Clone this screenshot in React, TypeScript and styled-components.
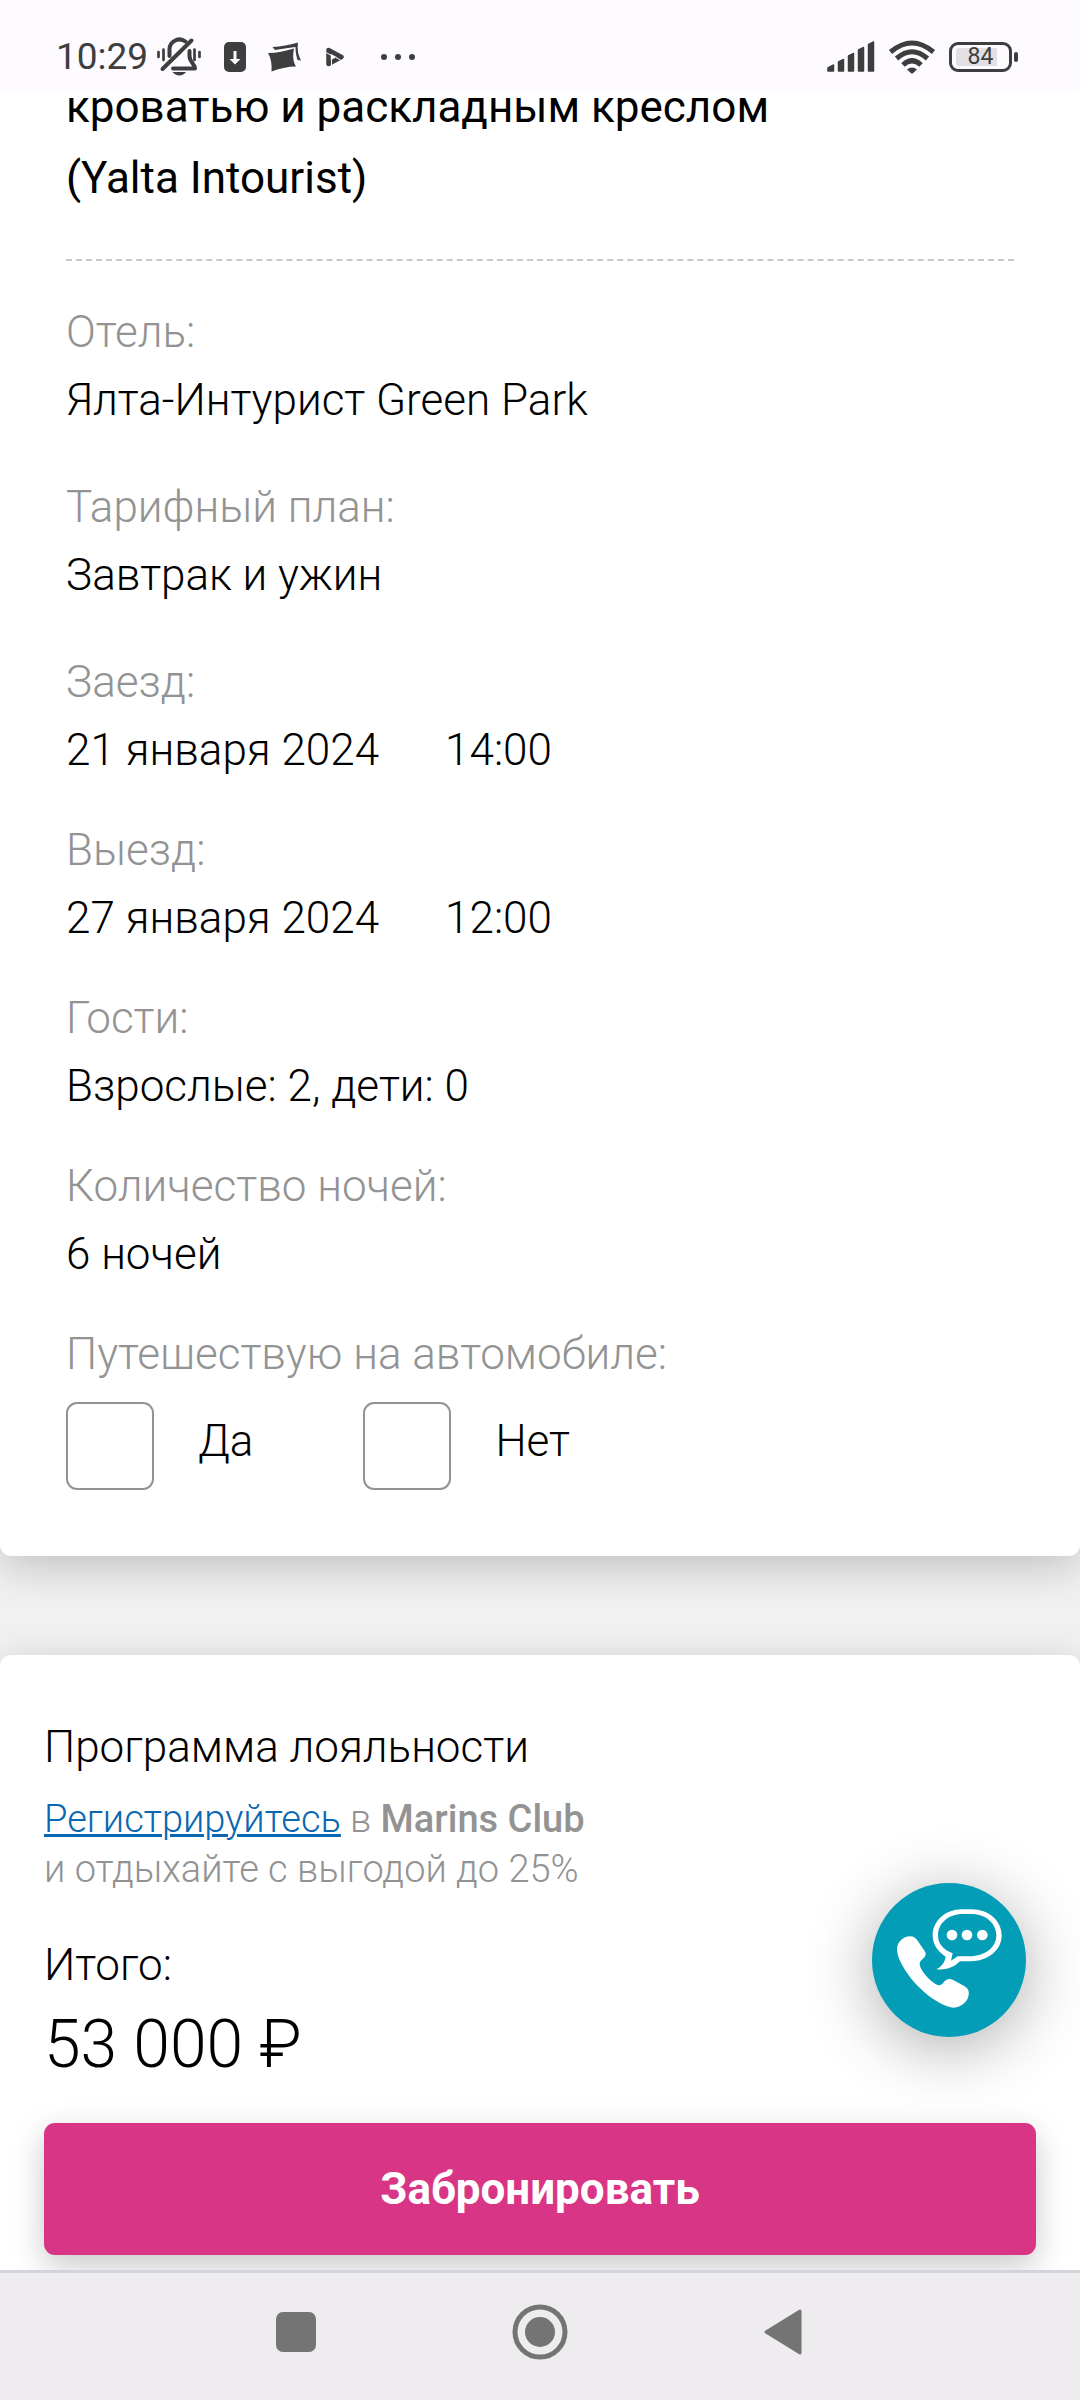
import React from "react";
import styled, { createGlobalStyle } from "styled-components";

const GlobalStyle = createGlobalStyle`
  *, *::before, *::after { box-sizing: border-box; }
  html, body { margin: 0; padding: 0; }
  body {
    background: #f1f1f1;
    color: #000;
    font-family: Roboto, "Open Sans", sans-serif;
    font-weight: 300;
    font-size: 44px;
  }
`;

const Screen = styled.div`
  position: relative;
  display: flex;
  flex-direction: column;
  height: 100vh;
  overflow: hidden;
`;

const StatusBar = styled.header`
  flex: none;
  z-index: 2;
  display: flex;
  align-items: center;
  justify-content: space-between;
  height: 92px;
  padding: 22px 62px 0 56px;
  background: #fdfbff;
  color: #3e3e3e;
`;

const StatusGroup = styled.div<{ $gap: number }>`
  display: flex;
  align-items: center;
  gap: ${(p) => p.$gap}px;
`;

const Clock = styled.time`
  font-size: 37px;
  line-height: 44px;
  font-weight: 400;
`;

const BatteryShell = styled.div`
  display: flex;
  align-items: center;
  gap: 2px;

  &::after {
    content: "";
    width: 4px;
    height: 10px;
    border-radius: 2px;
    background: #3e3e3e;
  }
`;

const BatteryBody = styled.div`
  display: grid;
  align-items: center;
  width: 63px;
  height: 30px;
  padding: 3px 4px;
  border: 3px solid #3e3e3e;
  border-radius: 9px;

  & > * { grid-area: 1 / 1; }
`;

const BatteryLevel = styled.span`
  height: 18px;
  border-radius: 3px 0 0 3px;
  background: #e2e0e4;
`;

const BatteryText = styled.span`
  text-align: center;
  font-size: 23px;
  line-height: 18px;
  font-weight: 400;
`;

const Content = styled.main`
  flex: 1;
  min-height: 0;
  display: flex;
  flex-direction: column;
  gap: 99px;
  margin-top: -20px;
`;

const Card = styled.section`
  background: #fff;
  box-shadow: 0 11px 44px rgba(0, 0, 0, 0.2);
`;

const RoomCard = styled(Card)`
  flex: none;
  padding: 0 66px 66px;
  border-radius: 0 0 11px 11px;
`;

const TotalCard = styled(Card)`
  flex: 1;
  display: flex;
  flex-direction: column;
  padding: 66px 44px 14px;
  border-radius: 11px 11px 0 0;
`;

const RoomTitle = styled.h2`
  margin: 0;
  padding-bottom: 45px;
  border-bottom: 2px dashed #c8c8c8;
  font-size: 44px;
  line-height: 71px;
  font-weight: 400;
`;

const Details = styled.dl`
  margin: 37px 0 32px;
  display: flex;
  flex-direction: column;
  gap: 32px;
`;

const Detail = styled.div<{ $wide?: boolean }>`
  padding-bottom: ${(p) => (p.$wide ? 7 : 0)}px;
  line-height: 68px;
`;

const Label = styled.dt`
  color: #939393;
`;

const Value = styled.dd`
  display: flex;
  gap: 66px;
  margin: 0;
`;

const CarChoice = styled.fieldset`
  margin: 0;
  padding: 0;
  border: 0;
`;

const CarLegend = styled.legend`
  padding: 0;
  margin-bottom: 14px;
  color: #939393;
  line-height: 68px;
`;

const Options = styled.div`
  display: flex;
  gap: 110px;
`;

const Option = styled.label`
  display: flex;
  gap: 44px;
  line-height: 78px;
`;

const Checkbox = styled.input`
  appearance: none;
  width: 88px;
  height: 88px;
  margin: 0;
  border: 2px solid #939393;
  border-radius: 11px;
  background: #fff;

  &:checked { background: #d93586; }
`;

const LoyaltyTitle = styled.h3`
  margin: 0 0 21px;
  font-size: 44px;
  line-height: 52px;
  font-weight: 300;
`;

const LoyaltyText = styled.p`
  margin: 0 0 45px;
  color: #939393;
  font-size: 38px;
  line-height: 50px;

  strong { font-weight: 500; }
`;

const SignUp = styled.a`
  color: #0a67b2;
  text-decoration: underline;
  text-decoration-thickness: 3px;
`;

const TotalLabel = styled.div`
  line-height: 52px;
`;

const Price = styled.div`
  margin: 15px 0 39px;
  font-size: 66px;
  line-height: 78px;
`;

const BookButton = styled.button`
  flex: none;
  height: 132px;
  border: 0;
  border-radius: 11px;
  background: #d93586;
  box-shadow: 0 11px 33px rgba(0, 0, 0, 0.22);
  color: #fff;
  font-family: inherit;
  font-size: 44px;
  font-weight: 700;
`;

const CallButton = styled.button`
  position: absolute;
  right: 54px;
  bottom: 363px;
  z-index: 1;
  width: 154px;
  height: 154px;
  padding: 0;
  border: 0;
  border-radius: 50%;
  background: #039db7;
  box-shadow: 0 11px 66px rgba(0, 0, 0, 0.32);
  color: #fff;

  svg { display: block; }
`;

const NavBar = styled.nav`
  flex: none;
  z-index: 2;
  display: flex;
  align-items: center;
  justify-content: center;
  gap: 184px;
  height: 130px;
  padding-bottom: 9px;
  border-top: 3px solid #d4d2dd;
  background: #eeecef;
`;

const NavButton = styled.button`
  width: 60px;
  height: 60px;
  padding: 0;
  border: 0;
  background: none;
  color: #747474;

  svg { display: block; }
`;

const MutedBell = () => (
  <svg width="46" height="40" viewBox="156 38 46 40" fill="none" stroke="currentColor" strokeWidth="4" strokeLinecap="round" strokeLinejoin="round">
    <path d="M162.500 70 191.500 41.500" />
    <path d="M169.500 57V50A10 10 0 0 1 185.500 42.500" />
    <path d="M189.500 52V57C189.500 63 195 65 195 69.500H173" />
    <path d="M158.500 53V58M163.500 50.500V61M194.500 50.500V61M199.500 53V58" strokeWidth="2.700" />
    <path d="M172.500 73H186C183 77.500 176 77.500 172.500 73Z" fill="currentColor" stroke="none" />
  </svg>
);

const DownloadBadge = () => (
  <svg width="22" height="30" viewBox="0 0 22 30">
    <rect width="22" height="30" rx="5" fill="currentColor" />
    <path d="M9.500 9h3v8h4L11 22.500 5.500 17h4z" fill="#fdfbff" />
  </svg>
);

const Photos = () => (
  <svg width="33" height="30" viewBox="0 0 33 30" fill="currentColor">
    <path d="M4.500 5C13 4.500 21 3 30 .5 29 7 30 13 33 18.500L29.500 18C28 13 27.500 9 27.500 5 20 6 13 7 7 8Z" />
    <path d="M0 11C9 11 17 9 26 6.500 24.500 14 25 19.500 28 24.500 20 24.500 11 26.500 3.500 29.500 4 22 3 16 0 11Z" />
  </svg>
);

const PlayMark = () => (
  <svg width="24" height="20" viewBox="-3 0 24 20">
    <path d="M2.500 3 15.500 10 2.500 17Z" fill="none" stroke="currentColor" strokeWidth="4.500" strokeLinejoin="round" />
    <path d="M0 5.500 5.500 8.500M5.500 13V18M10 10.500 14.500 13" stroke="#fdfbff" strokeWidth="1" />
  </svg>
);

const Dots = () => (
  <svg width="48" height="8" viewBox="0 0 48 8" fill="currentColor">
    <circle cx="15" cy="4" r="3" />
    <circle cx="29" cy="4" r="3" />
    <circle cx="43" cy="4" r="3" />
  </svg>
);

const Signal = () => (
  <svg width="48" height="32" viewBox="0 0 48 32" fill="currentColor" stroke="currentColor" strokeWidth="1.500" strokeLinejoin="round">
    <path d="M1 30V27L6.500 24V30ZM11.500 30V21L16.500 18.500V30ZM21.500 30V15L26.500 12.500V30ZM31.500 30V9L36.500 6.500V30ZM41.500 30V3.500L46.500 1V30Z" />
  </svg>
);

const Wifi = () => (
  <svg width="48" height="34" viewBox="0 0 48 34" fill="none" stroke="currentColor" strokeWidth="5">
    <path d="M2.500 12Q24-6 45.500 12" />
    <path d="M8.500 18.500Q24 5 39.500 18.500" />
    <path d="M15 25Q24 16.500 33 25" />
    <path d="M19 29.500Q24 25.500 29 29.500L24 34Z" fill="currentColor" stroke="none" />
  </svg>
);

const CallChat = () => (
  <svg width="154" height="154" viewBox="156 98 462 462" fill="currentColor">
    <path d="M231 295C232 275 250 258 270 258C282 258 288 264 294 273L314 302C320 312 316 320 308 326C302 331 298 335 299 344C304 366 334 396 353 404C362 407 366 402 371 396C379 387 387 384 398 388L434 408C444 414 448 422 446 434C443 455 423 471 402 472C376 471 332 446 300 413C262 376 230 325 231 295Z" />
    <path fillRule="evenodd" d="M425 177H455C505 177 545 211 545 255C545 300 504 333 450 333H420C402 351 378 360 349 357C366 347 374 337 377 319C352 303 338 281 338 255C338 211 378 177 425 177ZM428 191C385 191 354 219 354 255C354 279 368 297 398 309L393 331L413 318H449C495 318 529 292 529 255C529 219 497 191 455 191Z" />
    <circle cx="396" cy="254" r="16" />
    <circle cx="441" cy="254" r="16" />
    <circle cx="487" cy="254" r="16" />
  </svg>
);

type Row = { label: string; value: string; time?: string; wide?: boolean };

const rows: Row[] = [
  { label: "Отель:", value: "Ялта-Интурист Green Park", wide: true },
  { label: "Тарифный план:", value: "Завтрак и ужин", wide: true },
  { label: "Заезд:", value: "21 января 2024", time: "14:00" },
  { label: "Выезд:", value: "27 января 2024", time: "12:00" },
  { label: "Гости:", value: "Взрослые: 2, дети: 0" },
  { label: "Количество ночей:", value: "6 ночей" },
];

const batteryCharge = 84;

export default function App() {
  return (
    <>
      <GlobalStyle />
      <Screen>
        <StatusBar>
          <StatusGroup $gap={22}>
            <StatusGroup $gap={8}>
              <Clock>10:29</Clock>
              <MutedBell />
            </StatusGroup>
            <DownloadBadge />
            <Photos />
            <PlayMark />
            <Dots />
          </StatusGroup>
          <StatusGroup $gap={13}>
            <Signal />
            <Wifi />
            <BatteryShell>
              <BatteryBody>
                <BatteryLevel style={{ width: `${batteryCharge}%` }} />
                <BatteryText>{batteryCharge}</BatteryText>
              </BatteryBody>
            </BatteryShell>
          </StatusGroup>
        </StatusBar>

        <Content>
          <RoomCard>
            <RoomTitle>
              кроватью и раскладным креслом
              <br />
              (Yalta Intourist)
            </RoomTitle>
            <Details>
              {rows.map((row) => (
                <Detail key={row.label} $wide={row.wide}>
                  <Label>{row.label}</Label>
                  <Value>
                    <span>{row.value}</span>
                    {row.time && <span>{row.time}</span>}
                  </Value>
                </Detail>
              ))}
            </Details>
            <CarChoice>
              <CarLegend>Путешествую на автомобиле:</CarLegend>
              <Options>
                <Option>
                  <Checkbox type="checkbox" name="car-yes" />
                  Да
                </Option>
                <Option>
                  <Checkbox type="checkbox" name="car-no" />
                  Нет
                </Option>
              </Options>
            </CarChoice>
          </RoomCard>

          <TotalCard>
            <LoyaltyTitle>Программа лояльности</LoyaltyTitle>
            <LoyaltyText>
              <SignUp href="#register">Регистрируйтесь</SignUp> в <strong>Marins Club</strong>
              <br />и отдыхайте с выгодой до 25%
            </LoyaltyText>
            <TotalLabel>Итого:</TotalLabel>
            <Price>53 000 ₽</Price>
            <BookButton type="button">Забронировать</BookButton>
          </TotalCard>
        </Content>

        <CallButton type="button" aria-label="Связаться с нами">
          <CallChat />
        </CallButton>

        <NavBar>
          <NavButton type="button" aria-label="Недавние приложения">
            <svg width="60" height="60" viewBox="0 0 60 60" fill="currentColor">
              <rect x="10" y="10" width="40" height="40" rx="7" />
            </svg>
          </NavButton>
          <NavButton type="button" aria-label="Домой">
            <svg width="60" height="60" viewBox="0 0 60 60">
              <circle cx="30" cy="30" r="25" fill="none" stroke="currentColor" strokeWidth="5" />
              <circle cx="30" cy="30" r="15" fill="currentColor" />
            </svg>
          </NavButton>
          <NavButton type="button" aria-label="Назад">
            <svg width="60" height="60" viewBox="0 0 60 60" fill="currentColor" stroke="currentColor" strokeWidth="3" strokeLinejoin="round">
              <path d="M12 30 46 9V51Z" />
            </svg>
          </NavButton>
        </NavBar>
      </Screen>
    </>
  );
}
